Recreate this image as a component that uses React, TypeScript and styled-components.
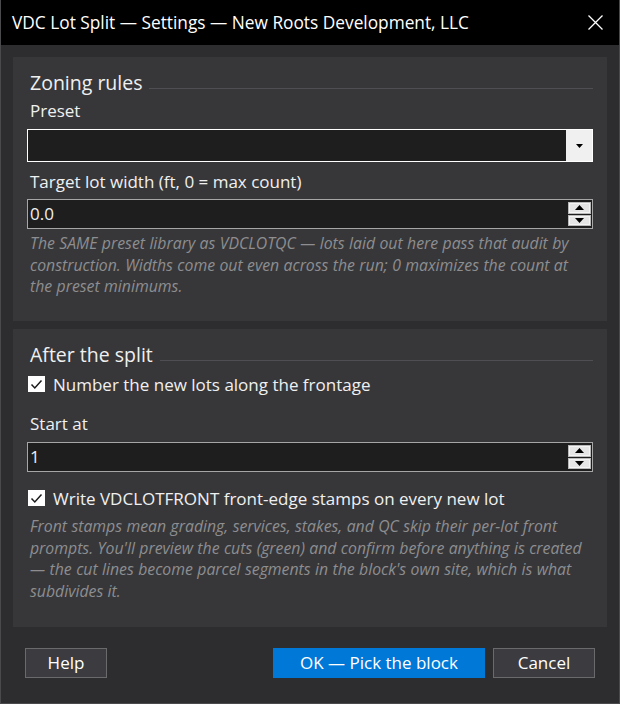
import React from "react";
import styled, { createGlobalStyle } from "styled-components";

const GlobalStyle = createGlobalStyle`
  html, body { margin: 0; padding: 0; background: #2d2d30; }
  * { box-sizing: border-box; }
`;

const FONT = `"Open Sans", "Noto Sans", sans-serif`;

const Window = styled.div`
  width: 620px;
  height: 704px;
  background: #2d2d30;
  border: 1px solid #4a4a4d;
  border-top: none;
  display: flex;
  flex-direction: column;
  font-family: ${FONT};
  color: #f0f0f0;
  overflow: hidden;
`;

const TitleBar = styled.div`
  height: 45px;
  flex: none;
  background: #000;
  display: flex;
  align-items: center;
  justify-content: space-between;
  padding: 0 16px 0 11px;
  font-size: 17.3px;
  color: #fff;
  white-space: nowrap;
`;

const Body = styled.div`
  padding: 12px 12px 0 12px;
  display: flex;
  flex-direction: column;
  gap: 8px;
`;

const Panel = styled.section<{ $pb: number; $h: number }>`
  background: #37373a;
  padding: 13px 14px ${(p) => p.$pb}px 14px;
  height: ${(p) => p.$h}px;
  display: flex;
  flex-direction: column;
`;

const HeadingRow = styled.div`
  display: flex;
  align-items: center;
  gap: 7px;
  padding-left: 3px;
  height: 26px;
`;

const Heading = styled.div`
  font-size: 19.5px;
  line-height: 26px;
  color: #f0f0f0;
  white-space: nowrap;
`;

const Rule = styled.div`
  flex: 1;
  height: 1px;
  background: #4f4f53;
  margin-top: 10px;
`;

const Label = styled.div<{ $mt: number }>`
  font-size: 17px;
  line-height: 22px;
  padding-left: 3px;
  margin-top: ${(p) => p.$mt}px;
  color: #f0f0f0;
`;

const Select = styled.div<{ $mt: number }>`
  margin-top: ${(p) => p.$mt}px;
  height: 33px;
  border: 1px solid #ffffff;
  background: #1e1e1e;
  display: flex;
`;

const SelectValue = styled.div`
  flex: 1;
`;

const SelectButton = styled.div`
  width: 26px;
  background: #f0f0f0;
  display: flex;
  align-items: center;
  justify-content: center;
`;

const Spin = styled.div<{ $mt: number }>`
  margin-top: ${(p) => p.$mt}px;
  height: 30px;
  border: 1px solid #a6a6a6;
  background: #1e1e1e;
  display: flex;
`;

const SpinValue = styled.div`
  flex: 1;
  font-size: 17px;
  line-height: 28px;
  padding-left: 2px;
  color: #f0f0f0;
`;

const SpinButtons = styled.div`
  width: 26px;
  padding: 2px 1px 2px 2px;
  display: flex;
  flex-direction: column;
  gap: 1px;
`;

const SpinButton = styled.div`
  flex: 1;
  background: #e5e5e5;
  border: 1px solid #b9b9b9;
  box-shadow: inset 0 0 0 1px #f4f4f4;
  display: flex;
  align-items: center;
  justify-content: center;
`;

const Help = styled.p<{ $mt: number }>`
  margin: ${(p) => p.$mt}px 0 0 0;
  padding-left: 3px;
  font-size: 15.8px;
  line-height: 21.6px;
  font-style: italic;
  color: #8e8e90;
  word-spacing: 0.3px;
`;

const CheckRow = styled.label<{ $mt: number }>`
  margin-top: ${(p) => p.$mt}px;
  display: flex;
  align-items: center;
  gap: 8px;
  padding-left: 1px;
  height: 22px;
  font-size: 17px;
  color: #f0f0f0;
  white-space: nowrap;
`;

const CheckBox = styled.span`
  width: 17px;
  height: 16px;
  background: #fff;
  display: flex;
  align-items: center;
  justify-content: center;
  flex: none;
`;

const Footer = styled.div`
  display: flex;
  justify-content: space-between;
  align-items: center;
  padding: 21px 24px 0 24px;
`;

const ButtonGroup = styled.div`
  display: flex;
  gap: 8px;
`;

const Button = styled.button<{ $w: number; $primary?: boolean }>`
  width: ${(p) => p.$w}px;
  height: 30px;
  font-family: ${FONT};
  font-size: 17px;
  line-height: 1;
  color: #fff;
  background: ${(p) => (p.$primary ? "#0078d7" : "#3c3c40")};
  border: 1px solid ${(p) => (p.$primary ? "#0078d7" : "#6a6a6d")};
  padding: 0 0 2px 0;
  cursor: default;
`;

const DownTri = ({ w = 8, h = 5 }: { w?: number; h?: number }) => (
  <svg width={w} height={h} viewBox={`0 0 ${w} ${h}`}>
    <polygon points={`0,0 ${w},0 ${w / 2},${h}`} fill="#000" />
  </svg>
);
const UpTri = ({ w = 8, h = 5 }: { w?: number; h?: number }) => (
  <svg width={w} height={h} viewBox={`0 0 ${w} ${h}`}>
    <polygon points={`0,${h} ${w},${h} ${w / 2},0`} fill="#000" />
  </svg>
);

const Check = () => (
  <svg width="13" height="11" viewBox="0 0 13 11">
    <polyline points="1.5,5.5 4.8,9 11.5,1.5" fill="none" stroke="#1a1a1a" strokeWidth="1.5" />
  </svg>
);

const CloseIcon = () => (
  <svg width="15" height="15" viewBox="0 0 15 15">
    <path d="M0.5 0.5 L14.5 14.5 M14.5 0.5 L0.5 14.5" stroke="#fff" strokeWidth="1.3" />
  </svg>
);

const SpinBox = ({ value, mt }: { value: string; mt: number }) => (
  <Spin $mt={mt}>
    <SpinValue>{value}</SpinValue>
    <SpinButtons>
      <SpinButton>
        <UpTri w={9} h={5} />
      </SpinButton>
      <SpinButton>
        <DownTri w={9} h={5} />
      </SpinButton>
    </SpinButtons>
  </Spin>
);

export default function App() {
  return (
    <>
      <GlobalStyle />
      <Window>
        <TitleBar>
          <span>VDC Lot Split — Settings — New Roots Development, LLC</span>
          <CloseIcon />
        </TitleBar>
        <Body>
          <Panel $pb={23} $h={264}>
            <HeadingRow>
              <Heading>Zoning rules</Heading>
              <Rule />
            </HeadingRow>
            <Label $mt={4}>Preset</Label>
            <Select $mt={7}>
              <SelectValue />
              <SelectButton>
                <DownTri w={7} h={4} />
              </SelectButton>
            </Select>
            <Label $mt={9}>Target lot width (ft, 0 = max count)</Label>
            <SpinBox value="0.0" mt={6} />
            <Help $mt={4}>
              The SAME preset library as VDCLOTQC — lots laid out here pass that audit by
              <br />
              construction. Widths come out even across the run; 0 maximizes the count at
              <br />
              the preset minimums.
            </Help>
          </Panel>
          <Panel $pb={24} $h={298}>
            <HeadingRow>
              <Heading>After the split</Heading>
              <Rule />
            </HeadingRow>
            <CheckRow $mt={5}>
              <CheckBox>
                <Check />
              </CheckBox>
              Number the new lots along the frontage
            </CheckRow>
            <Label $mt={18}>Start at</Label>
            <SpinBox value="1" mt={7} />
            <CheckRow $mt={15}>
              <CheckBox>
                <Check />
              </CheckBox>
              Write VDCLOTFRONT front-edge stamps on every new lot
            </CheckRow>
            <Help $mt={7}>
              Front stamps mean grading, services, stakes, and QC skip their per-lot front
              <br />
              prompts. You'll preview the cuts (green) and confirm before anything is created
              <br />
              — the cut lines become parcel segments in the block's own site, which is what
              <br />
              subdivides it.
            </Help>
          </Panel>
        </Body>
        <Footer>
          <Button $w={82}>Help</Button>
          <ButtonGroup>
            <Button $w={212} $primary>
              OK — Pick the block
            </Button>
            <Button $w={102}>Cancel</Button>
          </ButtonGroup>
        </Footer>
      </Window>
    </>
  );
}
